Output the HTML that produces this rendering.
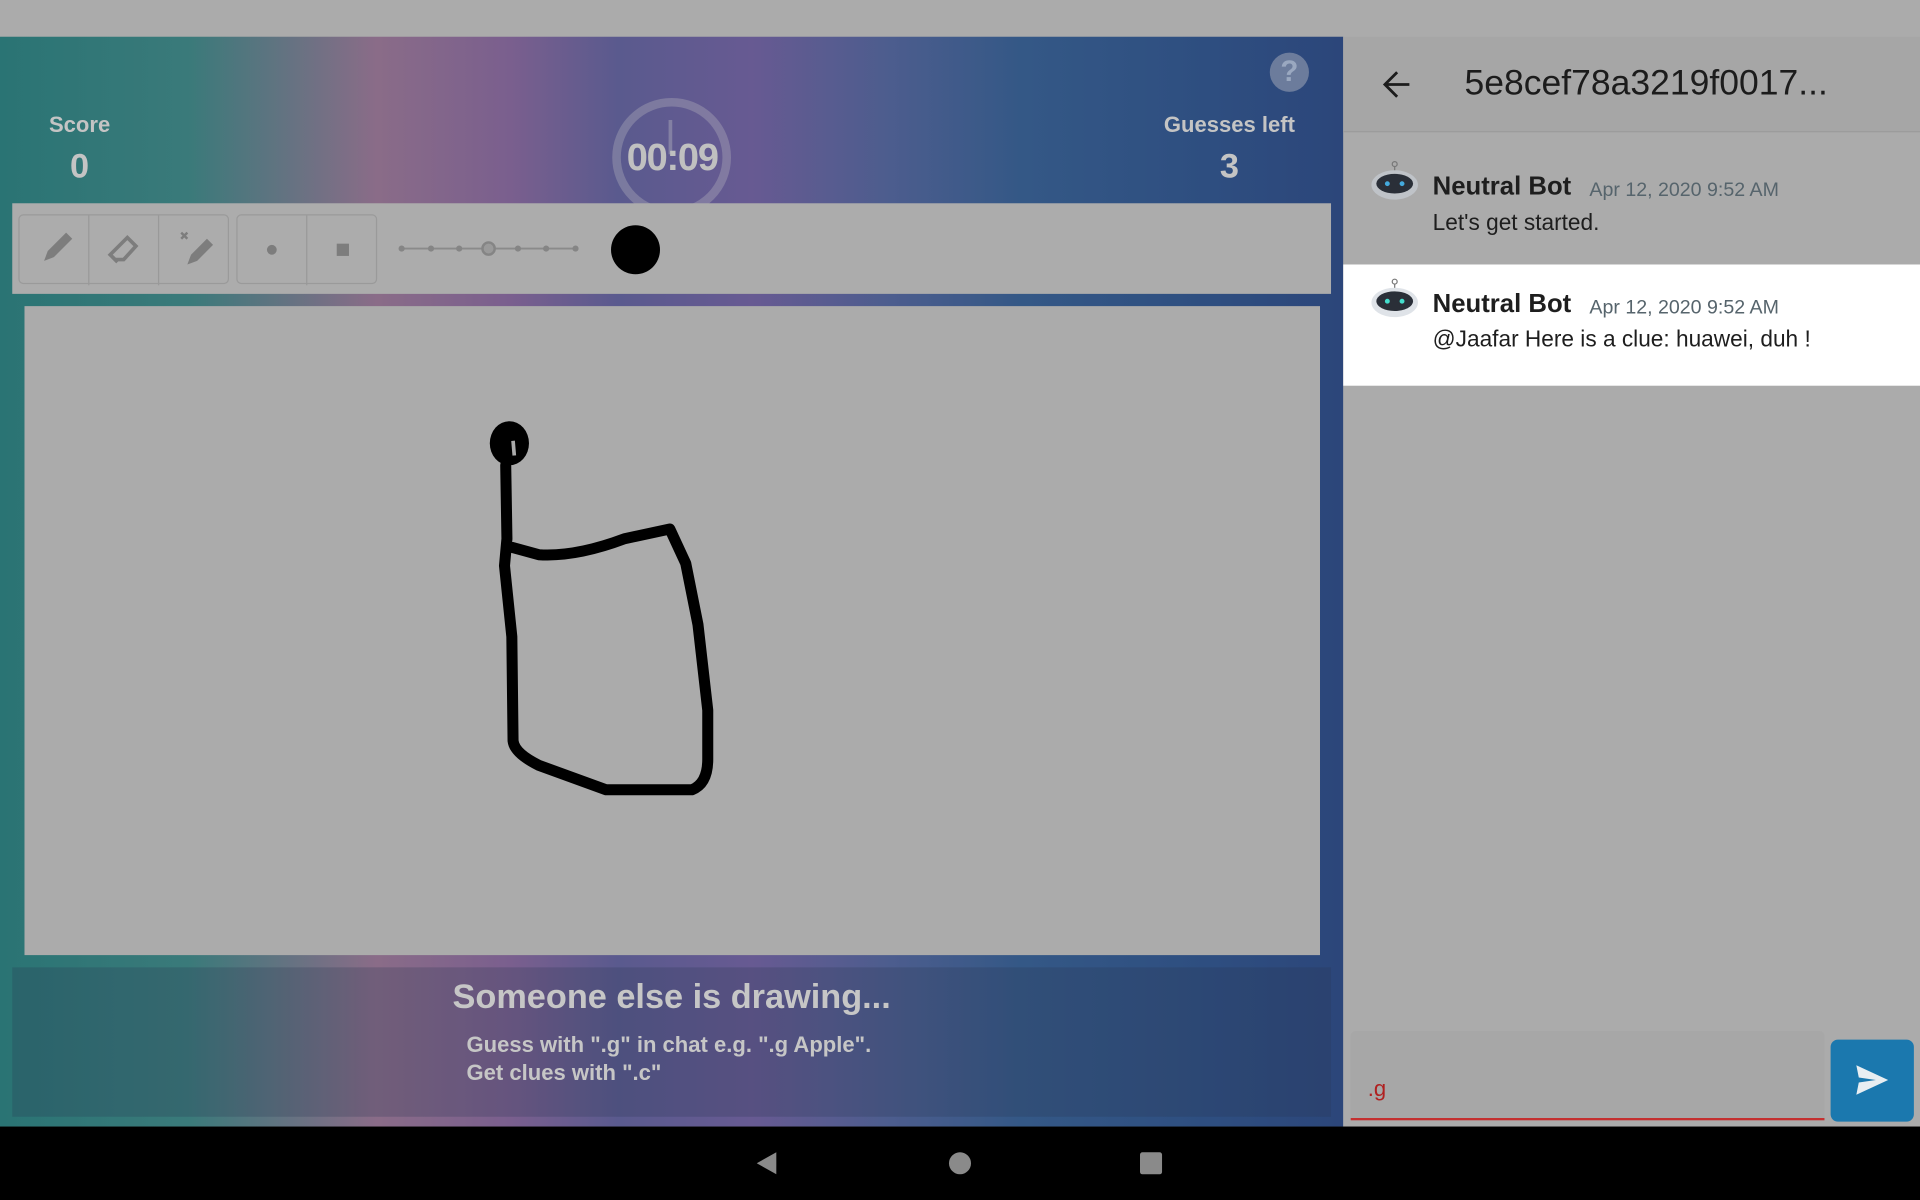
<!DOCTYPE html>
<html><head><meta charset="utf-8"><style>
*{margin:0;padding:0;box-sizing:border-box}
html,body{width:1920px;height:1200px;overflow:hidden;background:#ababab;font-family:"Liberation Sans",sans-serif}
#s{position:absolute;left:0;top:0;width:1568px;height:980px;transform:scale(1.22449);transform-origin:0 0}
.a{position:absolute}
.lbl{color:#c4c4c4;font-weight:bold;font-size:18px;text-align:center}
.val{color:#c4c4c4;font-weight:bold;font-size:28px;text-align:center}
.btn{position:absolute;top:0;width:57px;height:57px;border-right:1px solid #999}
.name{font-weight:bold;font-size:21px;color:#1e1e1e}
.time{font-size:16px;color:#56646c}
.msg{font-size:18.5px;color:#1e1e1e}
</style></head><body><div id="s">
<div class="a" style="left:0;top:30px;width:1097px;height:890px;background:linear-gradient(90deg,#2a7474 0%,#3a7a7a 14%,#8a6c88 28%,#7a5f8e 38%,#5a5a8e 46%,#675a92 56%,#4d5d8e 66%,#345886 76%,#2e4e80 90%,#2c467a 100%)"></div>
<div class="a" style="left:10px;top:790px;width:1077px;height:122px;background:rgba(40,50,80,.25)"></div>
<div class="a lbl" style="left:15px;top:92px;width:100px">Score</div>
<div class="a val" style="left:15px;top:120px;width:100px">0</div>
<div class="a lbl" style="left:930px;top:92px;width:148px">Guesses left</div>
<div class="a val" style="left:930px;top:120px;width:148px">3</div>
<div class="a" style="left:500px;top:80px;width:97px;height:97px;border:7px solid rgba(200,200,200,.3);border-radius:50%"></div>
<div class="a" style="left:546px;top:98px;width:3px;height:28px;background:rgba(200,200,200,.35)"></div>
<div class="a val" style="left:490px;top:111px;width:118px;font-size:31px;letter-spacing:-1px;color:#c0c0c0">00:09</div>
<div class="a" style="left:1037px;top:43px;width:32px;height:32px;border-radius:50%;background:#6c7c9c;color:#9aa8c0;font-weight:bold;font-size:24px;text-align:center;line-height:32px">?</div>
<div class="a" style="left:10px;top:166px;width:1077px;height:74px;background:#acacac"></div>
<div class="a" style="left:15px;top:175px;width:172px;height:57px;border:1px solid #9a9a9a;border-radius:4px">
<div class="btn" style="left:0"></div><div class="btn" style="left:57px"></div>
<svg class="a" style="left:0;top:0" width="172" height="57"><g fill="#7d7d7d"><path d="M20 37l3-8 15-15 5 5-15 15z"/><path d="M78 36l-4-4 14-14 7 7-10 11z M76 34l4 4" fill="none" stroke="#7d7d7d" stroke-width="3"/><path d="M137 40l3-8 13-13 5 5-13 13z"/><path d="M132 14l5 5M137 14l-5 5" stroke="#7d7d7d" stroke-width="2"/></g></svg></div>
<div class="a" style="left:193px;top:175px;width:115px;height:57px;border:1px solid #9a9a9a;border-radius:4px"><div class="btn" style="left:0"></div>
<div class="a" style="left:24px;top:24px;width:8px;height:8px;border-radius:50%;background:#7d7d7d"></div>
<div class="a" style="left:81px;top:23px;width:10px;height:10px;background:#7d7d7d"></div></div>
<svg class="a" style="left:320px;top:190px" width="160" height="26"><line x1="8" y1="13" x2="150" y2="13" stroke="#8a8a8a" stroke-width="1.5"/><g fill="#858585"><circle cx="8" cy="13" r="2.5"/><circle cx="32" cy="13" r="2.5"/><circle cx="55" cy="13" r="2.5"/><circle cx="79" cy="13" r="5" fill="#9a9a9a" stroke="#858585" stroke-width="2"/><circle cx="103" cy="13" r="2.5"/><circle cx="126" cy="13" r="2.5"/><circle cx="150" cy="13" r="2.5"/></g></svg>
<div class="a" style="left:499px;top:184px;width:40px;height:40px;border-radius:50%;background:#000"></div>
<div class="a" style="left:20px;top:250px;width:1058px;height:530px;background:#ababab"></div>
<svg class="a" style="left:0;top:0" width="1097" height="920"><path d="M413 380 L414 440 L412 462 L418 520 L419 605 Q420 615 440 625 L495 645 L565 645 Q578 640 578 620 L578 580 L570 510 L560 460 L547 432 L510 440 Q470 455 440 453 L418 447" fill="none" stroke="#000" stroke-width="9" stroke-linecap="round" stroke-linejoin="round"/><ellipse cx="416" cy="362" rx="16" ry="18" fill="#000"/><path d="M419 360l1 12" stroke="#ababab" stroke-width="3"/></svg>
<div class="a" style="left:0;top:798px;width:1097px;text-align:center;font-size:28px;font-weight:bold;color:#c6c6c6">Someone else is drawing...</div>
<div class="a" style="left:381px;top:842px;font-size:18px;font-weight:bold;color:#c6c6c6;line-height:23px">Guess with ".g" in chat e.g. ".g Apple".<br>Get clues with ".c"</div>
<div class="a" style="left:1097px;top:30px;width:471px;height:890px;background:#ababab"></div>
<div class="a" style="left:1097px;top:30px;width:471px;height:78px;background:#a6a6a6;border-bottom:1px solid #9c9c9c"></div>
<svg class="a" style="left:1128px;top:56px" width="26" height="26"><path d="M23 13H4M13 3L3 13l10 10" fill="none" stroke="#1c1c1c" stroke-width="2.3"/></svg>
<div class="a" style="left:1196px;top:52px;font-size:29px;color:#1c1c1c">5e8cef78a3219f0017...</div>
<div class="a" style="left:1097px;top:216px;width:471px;height:99px;background:#fff"></div>
<svg class="a" style="left:1118px;top:128px" width="42" height="40"><circle cx="21" cy="6" r="2" fill="none" stroke="#777"/><line x1="21" y1="8" x2="21" y2="12" stroke="#777"/><ellipse cx="21" cy="23" rx="19" ry="12" fill="#bfc3c8"/><ellipse cx="21" cy="22" rx="15" ry="8" fill="#2a2f38"/><circle cx="15" cy="22" r="2" fill="#4ad"/><circle cx="27" cy="22" r="2" fill="#4ad"/></svg>
<svg class="a" style="left:1118px;top:224px" width="42" height="40"><circle cx="21" cy="6" r="2" fill="none" stroke="#777"/><line x1="21" y1="8" x2="21" y2="12" stroke="#777"/><ellipse cx="21" cy="23" rx="19" ry="12" fill="#dfe3e8"/><ellipse cx="21" cy="22" rx="15" ry="8" fill="#2a2f38"/><circle cx="15" cy="22" r="2" fill="#4dc"/><circle cx="27" cy="22" r="2" fill="#4dc"/></svg>
<div class="a name" style="left:1170px;top:141px">Neutral Bot</div>
<div class="a time" style="left:1298px;top:147px">Apr 12, 2020 9:52 AM</div>
<div class="a msg" style="left:1170px;top:171px">Let's get started.</div>
<div class="a name" style="left:1170px;top:237px">Neutral Bot</div>
<div class="a time" style="left:1298px;top:243px">Apr 12, 2020 9:52 AM</div>
<div class="a msg" style="left:1170px;top:266px">@Jaafar Here is a clue: huawei, duh !</div>
<div class="a" style="left:1103px;top:842px;width:387px;height:73px;background:#a7a7a7;border-radius:4px 4px 0 0;border-bottom:2px solid #c43030"></div>
<div class="a" style="left:1117px;top:879px;font-size:18px;color:#b02020">.g</div>
<div class="a" style="left:1495px;top:849px;width:68px;height:67px;background:#1b78ae;border-radius:6px"></div>
<svg class="a" style="left:1514px;top:868px" width="30" height="28"><path d="M2 2L28 14 2 26l2-10 14-2-14-2z" fill="#e8eef2"/></svg>
<div class="a" style="left:0;top:920px;width:1568px;height:60px;background:#000"></div>
<svg class="a" style="left:0;top:920px" width="1568" height="60"><path d="M634 21v18l-16-9z" fill="#8a8a8a"/><circle cx="784" cy="30" r="9" fill="#8a8a8a"/><rect x="931" y="21" width="18" height="18" rx="2" fill="#8a8a8a"/></svg>
</div></body></html>
